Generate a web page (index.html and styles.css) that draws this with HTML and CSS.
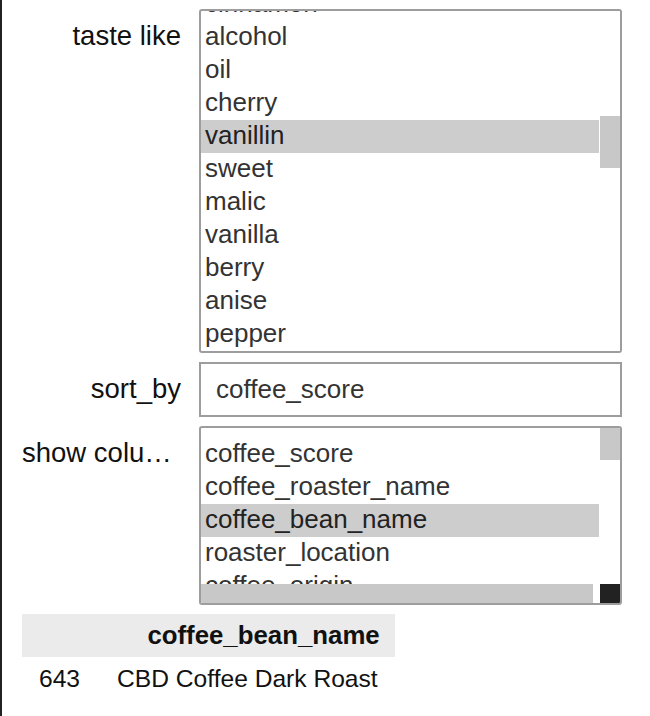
FILE: index.html
```html
<!DOCTYPE html>
<html>
<head>
<meta charset="utf-8">
<link rel="stylesheet" href="styles.css">
</head>
<body>
<div class="page">
  <div class="form">
    <div class="label">taste like</div>
    <div class="listbox tall">
      <div class="list-area">
        <ul class="options scrolled">
          <li>cinnamon</li>
          <li>alcohol</li>
          <li>oil</li>
          <li>cherry</li>
          <li class="selected">vanillin</li>
          <li>sweet</li>
          <li>malic</li>
          <li>vanilla</li>
          <li>berry</li>
          <li>anise</li>
          <li>pepper</li>
          <li>citrus</li>
          <li>smoke</li>
        </ul>
      </div>
      <div class="vtrack"><div class="vthumb thumb-a"></div></div>
    </div>

    <div class="label">sort_by</div>
    <div class="textbox">coffee_score</div>

    <div class="label">show columns</div>
    <div class="listbox short">
      <div class="list-area">
        <ul class="options">
          <li>coffee_score</li>
          <li>coffee_roaster_name</li>
          <li class="selected">coffee_bean_name</li>
          <li>roaster_location</li>
          <li>coffee_origin</li>
          <li>coffee_price</li>
        </ul>
      </div>
      <div class="vtrack"><div class="vthumb thumb-b"></div></div>
      <div class="htrack"><div class="hthumb"></div></div>
      <div class="corner"></div>
    </div>
  </div>

  <table class="result">
    <thead>
      <tr><th class="idx"></th><th>coffee_bean_name</th></tr>
    </thead>
    <tbody>
      <tr><td class="idx">643</td><td>CBD Coffee Dark Roast</td></tr>
    </tbody>
  </table>
</div>
</body>
</html>
```

FILE: styles.css
```css
html, body {
  margin: 0;
  padding: 0;
  background: #fff;
}
body {
  font-family: "Liberation Sans", Arial, Helvetica, sans-serif;
  font-size: 26px;
  color: #111;
}
.page {
  min-height: 716px;
  box-sizing: border-box;
  border-left: 2px solid #222;
  padding: 9px 0 0 20px;
}
.form {
  display: grid;
  grid-template-columns: 159px 423px;
  column-gap: 18px;
  row-gap: 9px;
  align-items: start;
}
.label {
  padding-top: 10px;
  line-height: 33px;
  font-size: 27.5px;
  text-align: right;
  white-space: nowrap;
  overflow: hidden;
  text-overflow: ellipsis;
  color: #111;
}
.listbox {
  box-sizing: border-box;
  border: 2px solid #9d9d9d;
  border-radius: 3px;
  display: grid;
  grid-template-columns: 1fr 20px;
  overflow: hidden;
  background: #fff;
}
.listbox.tall {
  height: 344px;
  grid-template-rows: 340px;
}
.listbox.short {
  height: 179px;
  grid-template-rows: 156px 19px;
}
.list-area {
  overflow: hidden;
  padding-right: 1px;
}
.options {
  list-style: none;
  margin: 0;
  padding: 10px 0 0 0;
}
.options.scrolled {
  margin-top: -33px;
}
.options li {
  box-sizing: border-box;
  height: 33px;
  line-height: 30px;
  padding: 0 0 3px 4px;
  color: #333;
  white-space: nowrap;
}
.options li.selected {
  background: #cdcdcd;
  color: #222;
}
.vtrack {
  background: #fff;
}
.vthumb {
  background: #c8c8c8;
  width: 20px;
}
.thumb-a {
  margin-top: 105px;
  height: 52px;
}
.thumb-b {
  height: 32px;
}
.htrack {
  background: #fff;
  padding-right: 7px;
}
.hthumb {
  background: #c8c8c8;
  height: 20px;
  margin-left: -1px;
}
.corner {
  background: #222;
  height: 20px;
}
.textbox {
  box-sizing: border-box;
  height: 55px;
  border: 2px solid #9d9d9d;
  padding-left: 15px;
  line-height: 51px;
  color: #333;
}
.result {
  border-collapse: collapse;
  margin-top: 9px;
}
.result th {
  background: #ebebeb;
  height: 43px;
  padding: 0 15px 0 17px;
  text-align: right;
  font-weight: bold;
  font-size: 25.8px;
  color: #111;
}
.result td {
  height: 44px;
  padding: 0 17px;
  font-size: 24.6px;
  color: #111;
}
.result .idx {
  padding-right: 20px;
}
```
